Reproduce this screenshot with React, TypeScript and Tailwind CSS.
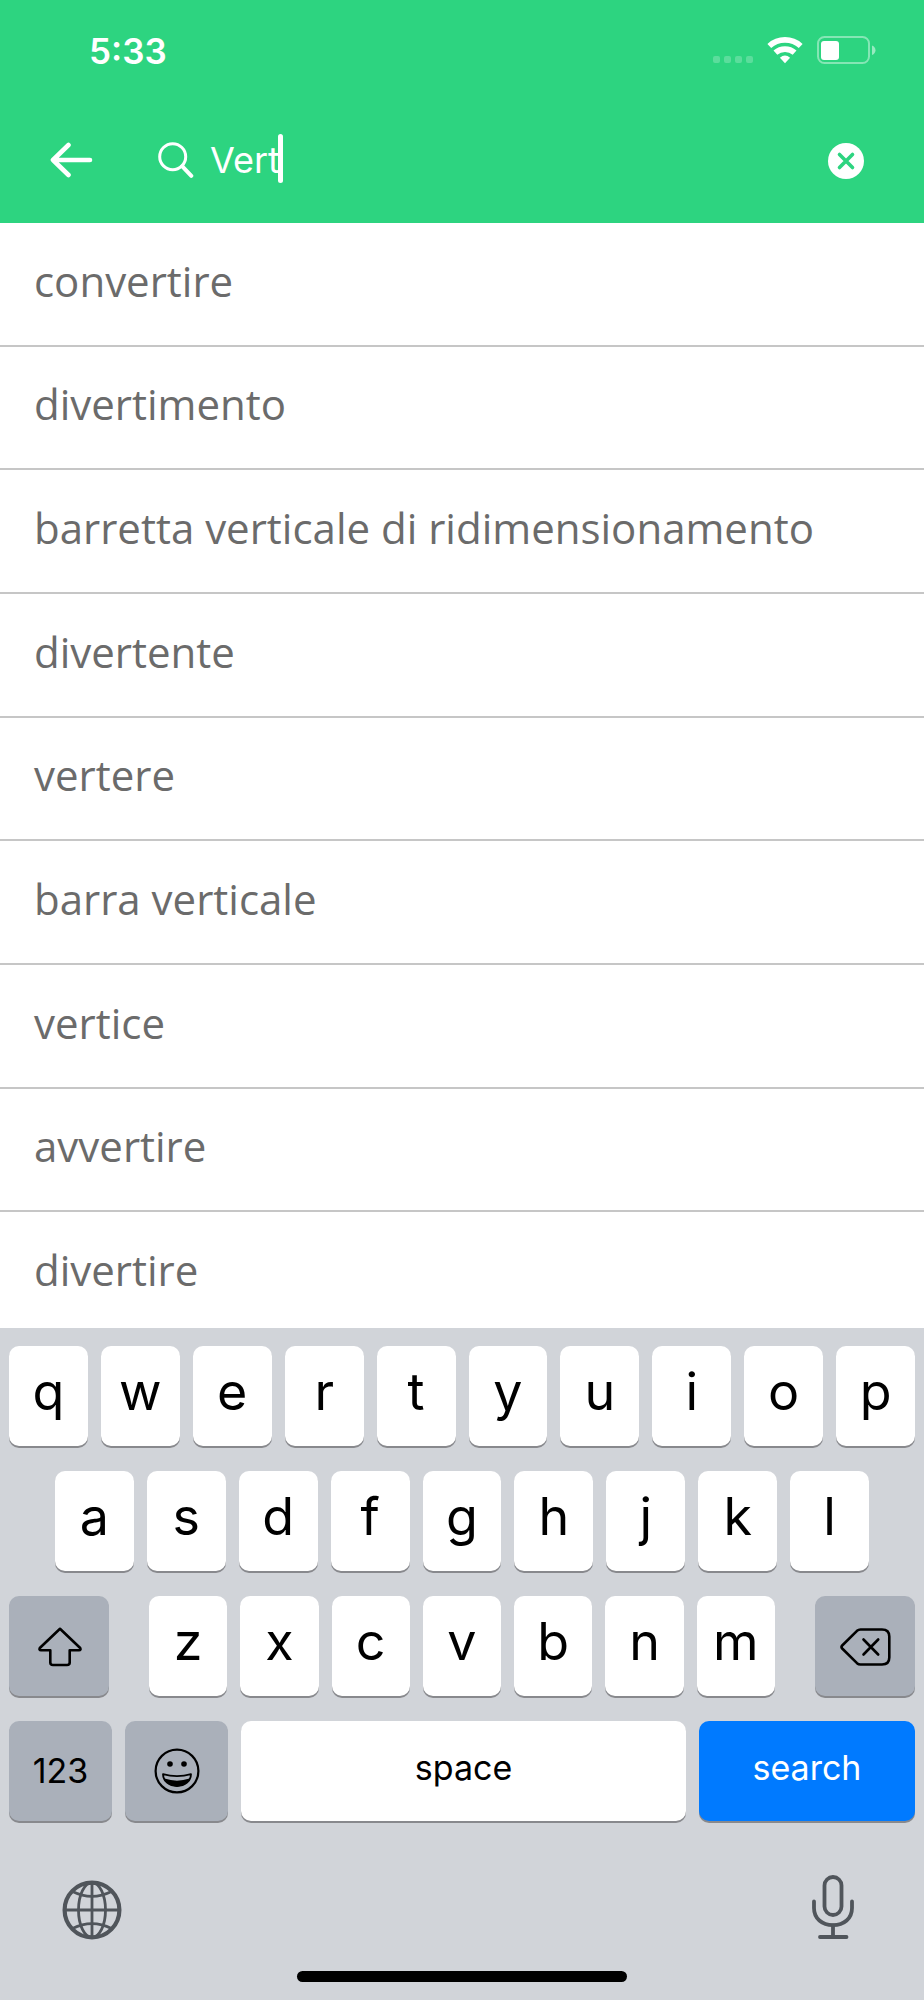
import { useState } from 'react';

const suggestions = [
  'convertire',
  'divertimento',
  'barretta verticale di ridimensionamento',
  'divertente',
  'vertere',
  'barra verticale',
  'vertice',
  'avvertire',
  'divertire',
];

const topRow = ['q', 'w', 'e', 'r', 't', 'y', 'u', 'i', 'o', 'p'];
const middleRow = ['a', 's', 'd', 'f', 'g', 'h', 'j', 'k', 'l'];
const bottomRow = ['z', 'x', 'c', 'v', 'b', 'n', 'm'];

const keyBase = 'h-[100px] rounded-[10px] shadow-[0_2px_0_#88898d] flex items-center justify-center';

function LetterKey({ letter, onPress }: { letter: string; onPress: (letter: string) => void }) {
  return (
    <button
      type="button"
      onClick={() => onPress(letter)}
      className={`${keyBase} min-w-0 flex-1 bg-white pb-2 text-[52px] leading-none text-black`}
    >
      {letter}
    </button>
  );
}

function StatusBar() {
  return (
    <div className="flex h-[100px] items-center justify-between pr-12 pl-[89px]">
      <span className="pt-0.5 text-[35px] leading-none font-semibold">5:33</span>
      <div className="flex items-center">
        <svg width="42" height="28" viewBox="0 0 42 28" fill="#fff" fillOpacity="0.22" aria-hidden="true">
          <rect x="0" y="20" width="7" height="7" rx="2" />
          <rect x="11" y="20" width="7" height="7" rx="2" />
          <rect x="22" y="20" width="7" height="7" rx="2" />
          <rect x="33" y="20" width="7" height="7" rx="2" />
        </svg>
        <svg className="ml-3" width="36" height="28" viewBox="0 0 36 28" fill="none" stroke="#fff" aria-hidden="true">
          <path d="M2.3 10 A23.4 23.4 0 0 1 33.7 10" strokeWidth="5.7" />
          <path d="M8.4 16.7 A14.4 14.4 0 0 1 27.6 16.7" strokeWidth="5.7" />
          <path d="M18 27.2 L12.9 21.8 Q18 17.2 23.1 21.8 Z" fill="#fff" stroke="none" />
        </svg>
        <svg className="ml-[14px]" width="59" height="28" viewBox="0 0 59 28" fill="none" aria-hidden="true">
          <rect x="1" y="1" width="51" height="26" rx="6.5" stroke="#fff" strokeOpacity="0.42" strokeWidth="2" />
          <rect x="4" y="5" width="18" height="19" rx="3" fill="#fff" />
          <path d="M55 9.5 Q58.5 11 58.5 14.2 Q58.5 17.5 55 19 Z" fill="#fff" fillOpacity="0.5" />
        </svg>
      </div>
    </div>
  );
}

export default function App() {
  const [query, setQuery] = useState('Vert');

  const type = (letter: string) => setQuery(query + letter);

  return (
    <div className="flex min-h-screen flex-col bg-white font-['Inter',sans-serif]">
      <header className="bg-[#2dd480] text-white">
        <StatusBar />
        <div className="flex h-[123px] items-start pt-9 pr-[60px] pl-[50px]">
          <button type="button" aria-label="Back" className="mt-[6px]">
            <svg width="43" height="36" viewBox="0 0 43 36" fill="none" stroke="currentColor" strokeWidth="4.6" strokeLinecap="round" strokeLinejoin="round">
              <path d="M18.5 3 L3 18 L18.5 33 M4 18 H40" />
            </svg>
          </button>
          <label htmlFor="search" aria-label="Search" className="mt-[6px] ml-[65px]">
            <svg width="36" height="37" viewBox="0 0 36 37" fill="none" stroke="currentColor" strokeLinecap="round">
              <circle cx="14.7" cy="14.7" r="13" strokeWidth="3" />
              <path d="M24.3 24.3 L33.3 33.8" strokeWidth="4" />
            </svg>
          </label>
          <div className="relative ml-4 flex-1">
            <input
              id="search"
              type="text"
              value={query}
              onChange={(e) => setQuery(e.target.value)}
              className="block h-[48px] w-full bg-transparent text-[36px] caret-transparent outline-none"
            />
            {query === 'Vert' && <span className="absolute -top-[2px] left-[68px] h-[49px] w-[5px] rounded-full bg-white" />}
          </div>
          <button type="button" aria-label="Clear" onClick={() => setQuery('')} className="mt-[7px]">
            <svg width="36" height="36" viewBox="0 0 36 36">
              <circle cx="18" cy="18" r="18" fill="#fff" />
              <path d="M11.5 11.5 L24.5 24.5 M24.5 11.5 L11.5 24.5" stroke="#2dd480" strokeWidth="3.6" strokeLinecap="round" />
            </svg>
          </button>
        </div>
      </header>

      <ul className="grid flex-1 auto-rows-fr bg-white">
        {suggestions.map((word) => (
          <li key={word} className="flex border-b-2 border-[#c6c6c6]">
            <button
              type="button"
              onClick={() => setQuery(word)}
              className="flex-1 px-[34px] pb-[6px] text-left font-['Open_Sans',sans-serif] text-[42px] leading-none text-[#6b6b6b]"
            >
              {word}
            </button>
          </li>
        ))}
      </ul>

      {/* Keyboard sits over the tail of the last suggestion */}
      <section aria-label="Keyboard" className="relative -mt-2 bg-[#d1d4d9] pt-[18px]">
        <div className="flex flex-col gap-[25px] px-[9px]">
          <div className="flex gap-[13px]">
            {topRow.map((letter) => (
              <LetterKey key={letter} letter={letter} onPress={type} />
            ))}
          </div>
          <div className="flex gap-[13px] px-[46px]">
            {middleRow.map((letter) => (
              <LetterKey key={letter} letter={letter} onPress={type} />
            ))}
          </div>
          <div className="flex gap-10">
            <button type="button" aria-label="Shift" className={`${keyBase} w-[100px] bg-[#aab0ba] pt-0.5 pl-0.5`}>
              <svg width="44" height="40" viewBox="0 0 44 40" fill="none" stroke="#000" strokeWidth="2.6" strokeLinejoin="round">
                <path d="M22 1.8 L1.8 21 Q0.8 23.2 3 23.2 H12.3 V35.5 Q12.3 38 15 38 H29 Q31.7 38 31.7 35.5 V23.2 H41 Q43.2 23.2 42.2 21 Z" />
              </svg>
            </button>
            <div className="flex flex-1 gap-[13px]">
              {bottomRow.map((letter) => (
                <LetterKey key={letter} letter={letter} onPress={type} />
              ))}
            </div>
            <button
              type="button"
              aria-label="Delete"
              onClick={() => setQuery(query.slice(0, -1))}
              className={`${keyBase} w-[100px] bg-[#aab0ba] pt-0.5`}
            >
              <svg width="51" height="38" viewBox="0 0 51 38" fill="none" stroke="#000" strokeWidth="2.6" strokeLinecap="round" strokeLinejoin="round">
                <path d="M20.5 1.5 H42 Q49.3 1.5 49.3 8.5 V29.5 Q49.3 36.5 42 36.5 H20.5 Q18.5 36.5 17 35.2 L2.2 20.5 Q0.8 19 2.2 17.5 L17 2.8 Q18.5 1.5 20.5 1.5 Z" />
                <path d="M23.5 11.5 L38.2 26.5 M38.2 11.5 L23.5 26.5" />
              </svg>
            </button>
          </div>
          <div className="flex gap-[13px]">
            <button type="button" className={`${keyBase} w-[103px] bg-[#aab0ba] text-[34px] leading-none text-black`}>
              123
            </button>
            <button type="button" aria-label="Emoji" className={`${keyBase} w-[103px] bg-[#aab0ba]`}>
              <svg width="46" height="46" viewBox="0 0 46 46" fill="none" stroke="#000" strokeWidth="2.2" strokeLinejoin="round">
                <circle cx="23" cy="23" r="21.4" />
                <circle cx="16" cy="16" r="2.8" fill="#000" stroke="none" />
                <circle cx="30" cy="16" r="2.8" fill="#000" stroke="none" />
                <path strokeWidth="1.8" d="M9 26.2 Q23 30.2 37 26.2 C37 33 31 38 23 38 C15 38 9 33 9 26.2 Z" />
                <path fill="#000" stroke="none" d="M10.5 30.5 Q23 34.8 35.5 30.5 C34 35.5 29 38.4 23 38.4 C17 38.4 12 35.5 10.5 30.5 Z" />
              </svg>
            </button>
            <button
              type="button"
              onClick={() => type(' ')}
              className={`${keyBase} flex-1 bg-white pb-[6px] text-[34px] leading-none text-black`}
            >
              space
            </button>
            <button type="button" className={`${keyBase} w-[216px] bg-[#007aff] pb-[6px] text-[34px] leading-none text-white`}>
              search
            </button>
          </div>
        </div>

        <div className="mt-[54px] flex items-end justify-between pr-[70px] pl-[62px]">
          <button type="button" aria-label="Next keyboard">
            <svg width="60" height="60" viewBox="-30 -30 60 60" fill="none" stroke="#50555b" strokeWidth="2.8">
              <circle r="27.4" strokeWidth="4.2" />
              <ellipse rx="13.5" ry="27.4" />
              <path d="M0 -27 V27 M-27 0 H27" />
              <path d="M-19.5 -18.5 Q0 -8.8 19.5 -18.5 M-19.5 18.5 Q0 8.8 19.5 18.5" />
            </svg>
          </button>
          <button type="button" aria-label="Dictate">
            <svg width="42" height="65" viewBox="0 0 42 65" fill="none" stroke="#50555b" strokeWidth="3.8" strokeLinecap="round">
              <rect x="12.5" y="2" width="17" height="38" rx="8.5" />
              <path d="M2 26.5 V33 C2 43.5 10 50.2 21 50.2 C32 50.2 40 43.5 40 33 V26.5" />
              <path d="M21 50.5 V61 M8 62 H34.5" />
            </svg>
          </button>
        </div>
        <div className="mx-auto mt-[31px] mb-[18px] h-[11px] w-[330px] rounded-full bg-black" />
      </section>
    </div>
  );
}
